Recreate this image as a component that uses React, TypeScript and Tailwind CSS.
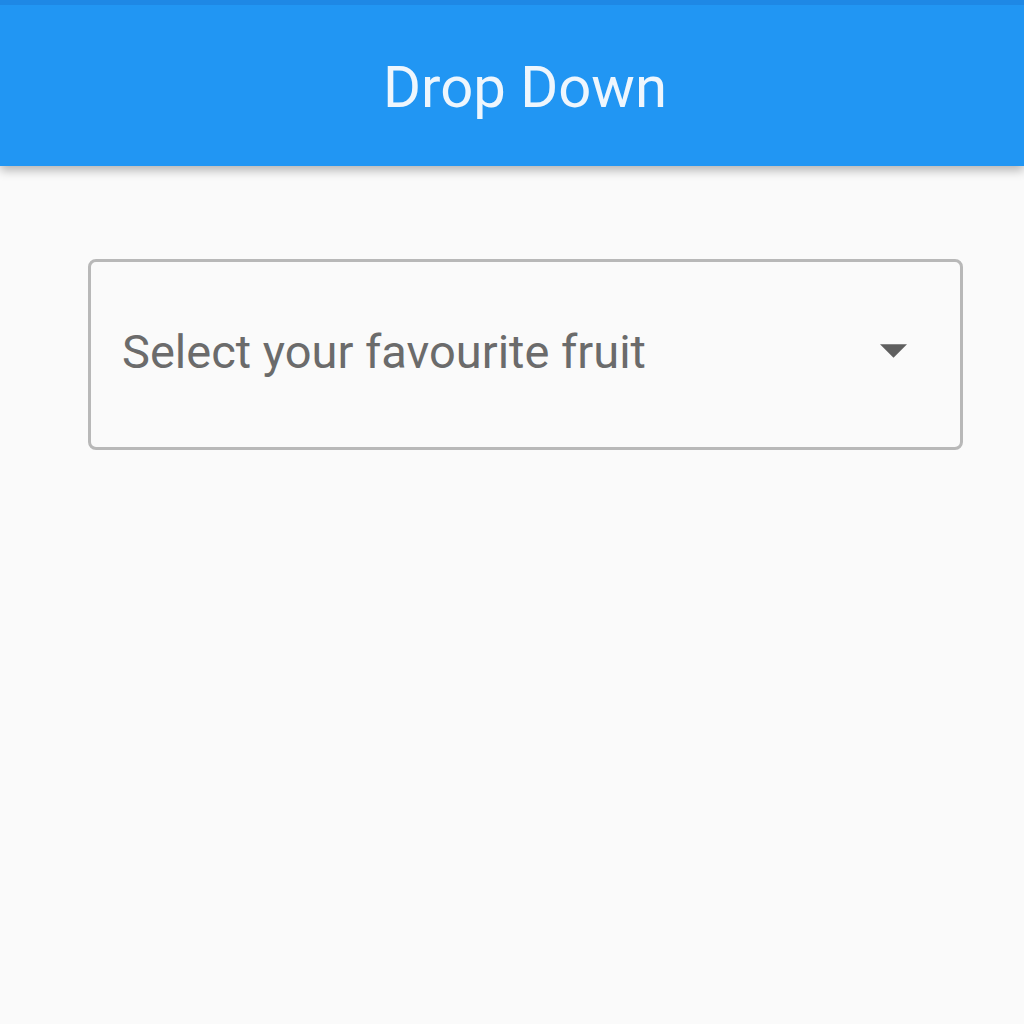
import React from 'react';

export default function App() {
    return (
        <div className="min-h-[1024px] w-[1024px] bg-[#fafafa] font-['Roboto',sans-serif]">
            <div className="border-t-[5px] border-[#1e88e5] bg-[#2196f3] h-[166px] flex items-center justify-center pl-[26px] shadow-[0_4px_10px_rgba(0,0,0,0.3)]">
                <h1 className="text-[58px] text-[#eef6fd] font-normal mt-[2px] leading-none">Drop Down</h1>
            </div>
            <div className="px-[88px] pt-[93px] pr-[61px]">
                <div className="h-[191px] border-[3px] border-[#b8b8b8] rounded-[8px] flex items-center pl-[31px] pr-[53px]">
                    <span className="flex-1 text-[47px] leading-none text-[#6b6b6b] mt-[-6px]">Select your favourite fruit</span>
                    <svg width="27" height="14" viewBox="0 0 28 14" className="mt-[-8px]">
                        <path d="M0 0 L28 0 L14 14 Z" fill="#5f5f5f" />
                    </svg>
                </div>
            </div>
        </div>
    );
}
